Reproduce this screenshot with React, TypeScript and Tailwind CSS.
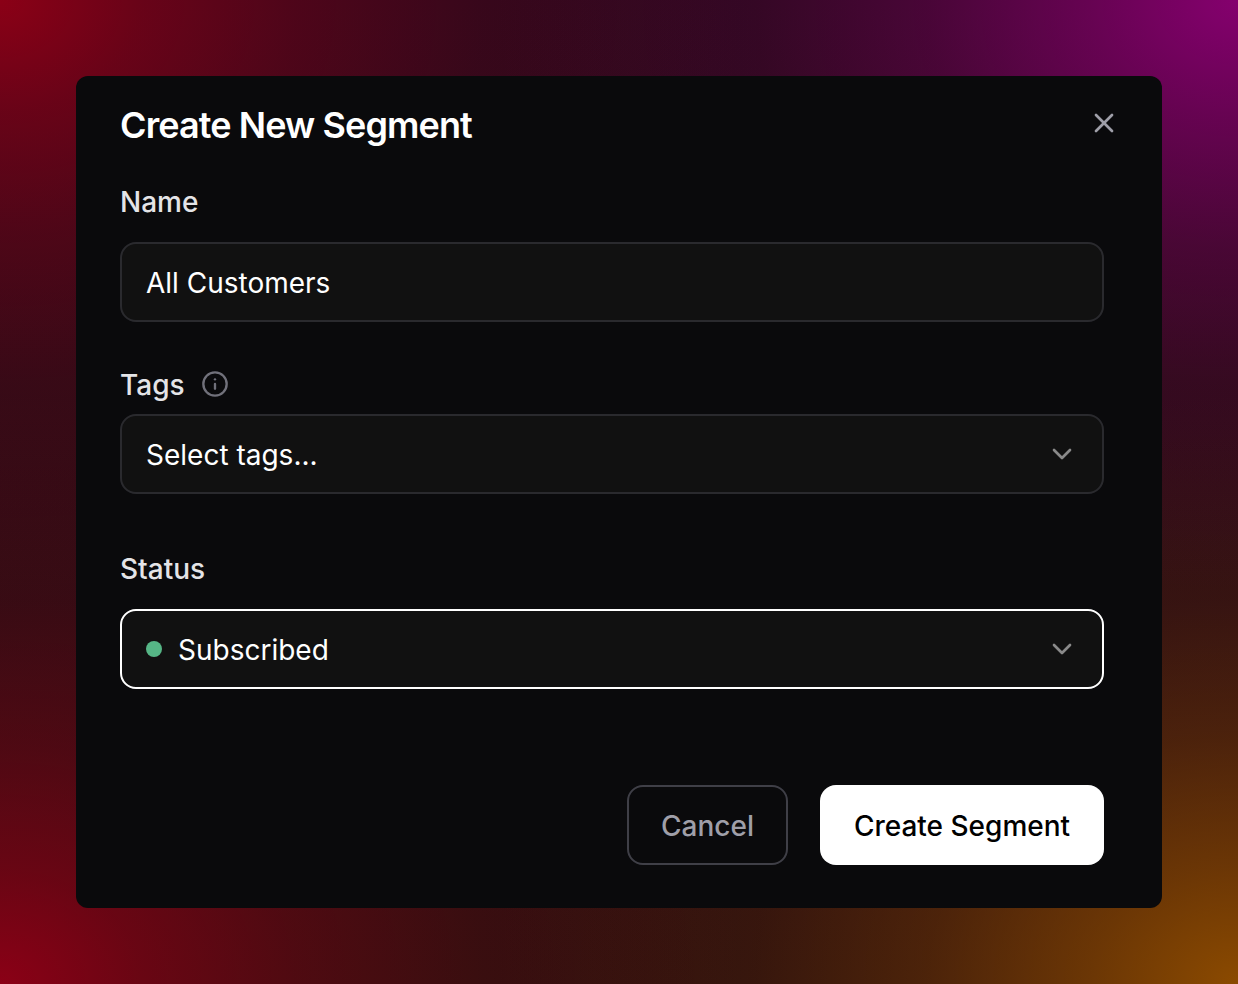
import { FC, ReactNode } from "react";
import { ChevronDown, Info, X } from "lucide-react";

interface FieldProps {
  label: string;
  info?: boolean;
  className?: string;
  children: ReactNode;
}

const Field: FC<FieldProps> = ({
  label,
  info = false,
  className = "",
  children,
}) => {
  return (
    <div className={className}>
      <div className="flex h-10 items-center text-[28px] font-medium text-zinc-200">
        {label}
        {info && (
          <Info className="relative -top-px ml-4 size-7 text-zinc-500" strokeWidth={2} />
        )}
      </div>
      {children}
    </div>
  );
};

interface SelectBoxProps {
  active?: boolean;
  className?: string;
  children: ReactNode;
}

const SelectBox: FC<SelectBoxProps> = ({
  active = false,
  className = "",
  children,
}) => {
  return (
    <button
      type="button"
      className={`flex h-20 w-full items-center justify-between rounded-2xl border-2 bg-[#111111] px-6 text-[28px] text-white ${
        active ? "border-white" : "border-[#2a2a2e]"
      } ${className}`}
    >
      <span className="flex items-center gap-4">{children}</span>
      <ChevronDown className="size-8 text-[#8a8a8a]" strokeWidth={2} />
    </button>
  );
};

const App: FC = () => {
  return (
    <div className="h-[984px] w-[1238px] bg-[radial-gradient(60%_60%_at_0%_0%,#8b0016,#8b0016a3_19%,#8b00165c_40%,#8b001621_65%,#8b001600),radial-gradient(60%_60%_at_100%_0%,#85006e,#85006ea8_20%,#85006e54_42%,#85006e1c_65%,#85006e00),radial-gradient(60%_60%_at_0%_100%,#8b0016,#8b0016a3_19%,#8b00165c_40%,#8b001621_65%,#8b001600),radial-gradient(60%_60%_at_100%_100%,#8b4a00,#8b4a00a8_20%,#8b4a0054_42%,#8b4a001c_65%,#8b4a0000),linear-gradient(to_bottom,#2b081c,#2d100e)] p-[76px] font-['Inter',sans-serif]">
      <div className="h-[832px] w-[1086px] rounded-xl bg-[#0a0a0c] pt-[26px] pr-[58px] pl-[44px]">
        {/* Header */}
        <div className="flex h-12 items-center justify-between">
          <h2 className="-mt-0.5 text-[36px] font-semibold tracking-[-0.9px] text-white">
            Create New Segment
          </h2>
          <button type="button" aria-label="Close" className="-mr-4 text-zinc-400">
            <X className="relative -top-[3px] size-8" strokeWidth={2} />
          </button>
        </div>

        {/* Form */}
        <Field label="Name" className="mt-8">
          <input
            type="text"
            defaultValue="All Customers"
            className="mt-5 block h-20 w-full rounded-2xl border-2 border-[#2a2a2e] bg-[#111111] px-6 pt-0.5 text-[28px] text-white outline-none"
          />
        </Field>
        <Field label="Tags" info className="mt-[43px]">
          <SelectBox className="mt-[9px]">
            <span className="pt-0.5">Select tags...</span>
          </SelectBox>
        </Field>
        <Field label="Status" className="mt-[55px]">
          <SelectBox active className="mt-5">
            <span className="size-4 rounded-full bg-[#56b686]" />
            <span className="pt-0.5">Subscribed</span>
          </SelectBox>
        </Field>

        {/* Actions */}
        <div className="mt-24 flex justify-end gap-8 text-[28px] font-medium">
          <button
            type="button"
            className="h-20 w-[161px] rounded-2xl border-2 border-zinc-700 pt-0.5 text-zinc-400"
          >
            Cancel
          </button>
          <button type="button" className="h-20 w-[284px] rounded-2xl bg-white pt-0.5 text-black">
            Create Segment
          </button>
        </div>
      </div>
    </div>
  );
};

export default App;
